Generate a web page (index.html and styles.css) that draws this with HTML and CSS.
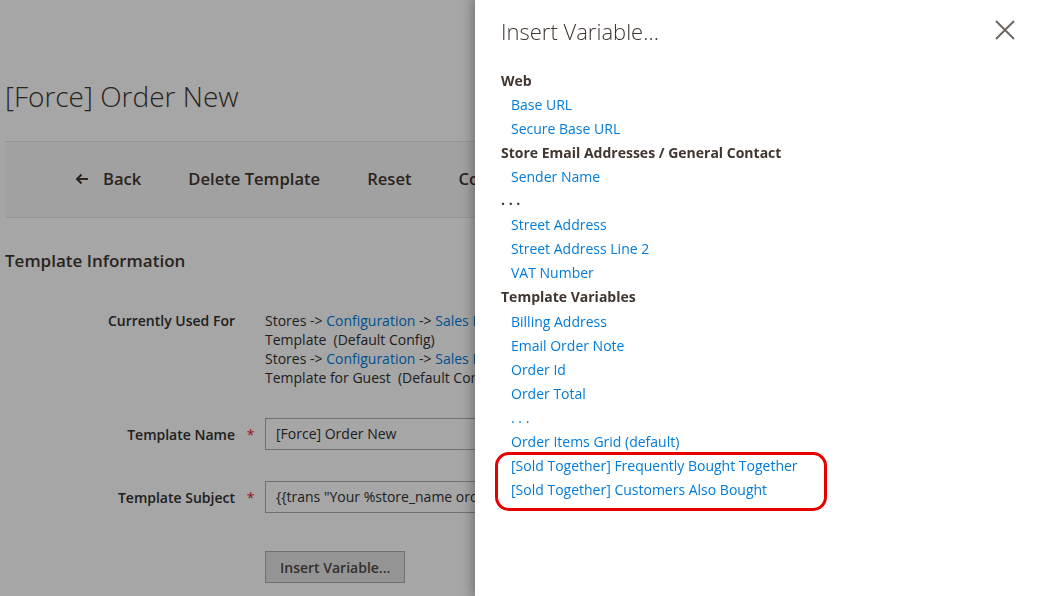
FILE: index.html
```html
<!DOCTYPE html>
<html>
<head>
<meta charset="utf-8">
<link rel="stylesheet" href="styles.css">
</head>
<body>
<div class="page">
  <h1 class="page-title">[Force] Order New</h1>
  <div class="toolbar">
    <button class="tb-btn back">
      <svg class="arrow" width="14" height="12" viewBox="0 0 14 12"><path d="M13 6H2M6.5 1.5L2 6l4.5 4.5" fill="none" stroke="#41362f" stroke-width="2"/></svg>
      Back
    </button>
    <button class="tb-btn">Delete Template</button>
    <button class="tb-btn">Reset</button>
    <button class="tb-btn">Convert to Plain Text</button>
    <button class="tb-btn">Preview Template</button>
  </div>
  <h2 class="legend">Template Information</h2>
  <div class="form">
    <div class="row row-used">
      <div class="label">Currently Used For</div>
      <div class="star"></div>
      <div class="value text">
        <span class="line">Stores -&gt; <a>Configuration</a> -&gt; <a>Sales Emails</a> -&gt; Order -&gt; New Order Confirmation</span>
        <span class="line">Template&nbsp; (Default Config)</span>
        <span class="line">Stores -&gt; <a>Configuration</a> -&gt; <a>Sales Emails</a> -&gt; Order -&gt; New Order Confirmation</span>
        <span class="line">Template for Guest&nbsp; (Default Config)</span>
      </div>
    </div>
    <div class="row row-name">
      <div class="label">Template Name</div>
      <div class="star">*</div>
      <div class="value"><div class="input">[Force] Order New</div></div>
    </div>
    <div class="row row-subject">
      <div class="label">Template Subject</div>
      <div class="star">*</div>
      <div class="value"><div class="input">{{trans "Your %store_name order confirmation"}}</div></div>
    </div>
    <div class="row row-btn">
      <div class="label"></div>
      <div class="star"></div>
      <div class="value"><button class="insert-btn">Insert Variable...</button></div>
    </div>
  </div>
</div>
<div class="overlay"></div>
<aside class="modal">
  <div class="modal-head">
    <h2 class="modal-title">Insert Variable...</h2>
    <svg class="close" width="22" height="22" viewBox="0 0 22 22"><path d="M2 2L20 20M20 2L2 20" stroke="#6e6762" stroke-width="2"/></svg>
  </div>
  <div class="vars">
    <div class="group">
      <div class="heading">Web</div>
      <a class="var">Base URL</a>
      <a class="var">Secure Base URL</a>
    </div>
    <div class="group">
      <div class="heading">Store Email Addresses / General Contact</div>
      <a class="var">Sender Name</a>
    </div>
    <div class="group">
      <div class="heading dots">. . .</div>
      <a class="var">Street Address</a>
      <a class="var">Street Address Line 2</a>
      <a class="var">VAT Number</a>
    </div>
    <div class="group tvars">
      <div class="heading">Template Variables</div>
      <a class="var">Billing Address</a>
      <a class="var">Email Order Note</a>
      <a class="var">Order Id</a>
      <a class="var">Order Total</a>
      <a class="var">. . .</a>
      <a class="var">Order Items Grid (default)</a>
      <a class="var">[Sold Together] Frequently Bought Together</a>
      <a class="var">[Sold Together] Customers Also Bought</a>
    </div>
  </div>
  <div class="highlight"></div>
</aside>
</body>
</html>
```

FILE: styles.css
```css
html, body {
  margin: 0;
  padding: 0;
  width: 1044px;
  height: 596px;
  overflow: hidden;
  background: #ffffff;
  font-family: "Open Sans", "Noto Sans", sans-serif;
  color: #41362f;
}
.page {
  padding-left: 5px;
  width: 1100px;
}
.page-title {
  margin: 0;
  padding-top: 78px;
  font-size: 28px;
  line-height: 36px;
  font-weight: 300;
  color: #41362f;
}
.toolbar {
  margin-top: 27px;
  height: 73px;
  padding-bottom: 2px;
  background: #f8f8f8;
  border-top: 1px solid #e3e3e3;
  border-bottom: 1px solid #e3e3e3;
  display: flex;
  align-items: center;
  gap: 47px;
  padding-left: 70px;
}
.tb-btn {
  border: 0;
  background: transparent;
  padding: 0;
  font-family: inherit;
  font-size: 16.6px;
  font-weight: 600;
  color: #41362f;
  display: flex;
  align-items: center;
  white-space: nowrap;
}
.tb-btn .arrow {
  margin-right: 14px;
}
.legend {
  margin: 0;
  padding-top: 31px;
  font-size: 17px;
  line-height: 24px;
  font-weight: 600;
  color: #41362f;
}
.form {
  padding-top: 38px;
}
.row {
  display: grid;
  grid-template-columns: 230px 30px 1fr;
  align-items: start;
}
.label {
  text-align: right;
  font-size: 14px;
  font-weight: 600;
  color: #303030;
  line-height: 19px;
}
.star {
  text-align: center;
  color: #e22626;
  font-size: 14px;
  line-height: 19px;
  padding-left: 1px;
}
.text {
  font-size: 14px;
  line-height: 19px;
  color: #303030;
}
.text .line {
  display: block;
  white-space: nowrap;
}
.text a {
  color: #007bdb;
}
.row-name {
  margin-top: 31px;
}
.row-name .label, .row-name .star,
.row-subject .label, .row-subject .star {
  padding-top: 7px;
}
.row-subject {
  margin-top: 31px;
}
.input {
  width: 600px;
  height: 30px;
  border: 1px solid #adadad;
  background: #ffffff;
  font-size: 14px;
  line-height: 30px;
  padding: 0 10px;
  color: #303030;
  white-space: nowrap;
}
.row-btn {
  margin-top: 38px;
}
.insert-btn {
  height: 32px;
  border: 1px solid #adadad;
  background: #e3e3e3;
  padding: 0 14px;
  font-family: inherit;
  font-size: 14px;
  font-weight: 600;
  color: #514943;
}
.overlay {
  position: fixed;
  inset: 0;
  background: rgba(0, 0, 0, 0.35);
}
.modal {
  position: fixed;
  top: 0;
  right: 0;
  bottom: 0;
  width: 569px;
  background: #ffffff;
  box-shadow: 0 0 12px 2px rgba(0, 0, 0, 0.35);
  padding-left: 26px;
  box-sizing: border-box;
}
.modal-head {
  display: flex;
  justify-content: space-between;
  align-items: flex-start;
  padding-top: 16px;
  padding-right: 28px;
}
.modal-title {
  margin: 0;
  font-size: 22px;
  line-height: 30px;
  font-weight: 300;
  color: #41362f;
}
.close {
  margin-top: 3px;
}
.vars {
  padding-top: 23px;
  display: flex;
  flex-direction: column;
}
.group {
  display: flex;
  flex-direction: column;
}
.heading {
  font-size: 14px;
  font-weight: 700;
  line-height: 24px;
  color: #41362f;
}
.heading.dots {
  line-height: 22px;
  margin-bottom: 2px;
}
.var {
  font-size: 14px;
  line-height: 24px;
  color: #007bdb;
  padding-left: 10px;
}
.tvars .heading {
  margin-bottom: 1px;
}
.highlight {
  position: absolute;
  left: 20px;
  top: 452px;
  width: 326px;
  height: 53px;
  border: 3px solid #e60000;
  border-radius: 14px;
}
```
